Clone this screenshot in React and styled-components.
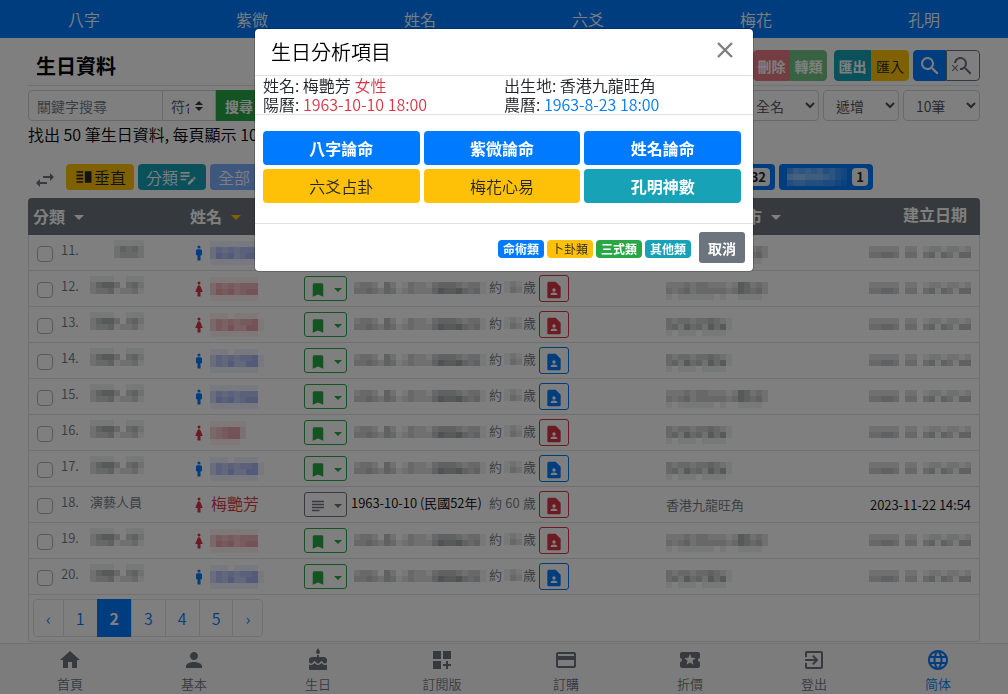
import React from "react";
import styled, { createGlobalStyle, css } from "styled-components";
import {
  MdSearch,
  MdSearchOff,
  MdSwapHoriz,
  MdVerticalSplit,
  MdEditNote,
  MdMan,
  MdWoman,
  MdBookmark,
  MdSubject,
  MdContactPage,
  MdHome,
  MdPerson,
  MdCake,
  MdDashboardCustomize,
  MdCreditCard,
  MdLocalActivity,
  MdExitToApp,
  MdLanguage,
} from "react-icons/md";

const color = {
  primary: "#007bff",
  secondary: "#6c757d",
  success: "#28a745",
  danger: "#dc3545",
  warning: "#ffc107",
  info: "#17a2b8",
  dark: "#212529",
  line: "#dee2e6",
  field: "#ced4da",
};

const weight = { normal: 350, bold: 700 };

const GlobalStyle = createGlobalStyle`
  *, *::before, *::after { box-sizing: border-box; }
  body {
    margin: 0;
    background: #fff;
    color: #000;
    font-family: "Noto Sans CJK TC", "Noto Sans", sans-serif;
    font-size: 16px;
    line-height: 20px;
    font-weight: ${weight.normal};
  }
  button, input, select { font-family: inherit; font-weight: inherit; margin: 0; }
  button { cursor: pointer; }
  svg { display: block; flex: none; }
`;

const TopNav = styled.nav`
  display: grid;
  grid-template-columns: repeat(6, 1fr);
  height: 38px;
  background: ${color.primary};
`;

const TopLink = styled.a`
  display: flex;
  align-items: center;
  justify-content: center;
  color: #fff;
  text-decoration: none;
`;

const Page = styled.main`
  padding: 0 28px 51px;
`;

const TitleBar = styled.header`
  display: flex;
  align-items: center;
  padding: 12px 0 4px 8px;
  border-bottom: 1px solid ${color.line};
`;

const Title = styled.h1`
  flex: 1;
  margin: 0;
  font-size: 20px;
  line-height: 30px;
  font-weight: ${weight.bold};
`;

const ButtonGroup = styled.div`
  display: flex;
  margin-left: ${(p) => p.$gap}px;
  & > *:first-child { border-radius: 4px 0 0 4px; }
  & > *:last-child { border-radius: 0 4px 4px 0; }
`;

const ToolButton = styled.button`
  display: flex;
  align-items: center;
  justify-content: center;
  height: 31px;
  width: ${(p) => p.$width || 37}px;
  padding: 0;
  border: 1px solid ${(p) => (p.$outline ? color.secondary : color[p.$tone])};
  background: ${(p) => (p.$outline ? "transparent" : color[p.$tone])};
  color: ${(p) => (p.$outline ? color.secondary : p.$tone === "warning" ? color.dark : "#fff")};
  font-size: 14px;
  line-height: 20px;
  font-weight: ${(p) => (p.$tone === "warning" ? weight.normal : weight.bold)};
  &:disabled { opacity: 0.65; }
`;

const FilterBar = styled.form`
  display: flex;
  justify-content: space-between;
  margin-top: 4px;
`;

const SearchGroup = styled.div`
  display: flex;
`;

const SortGroup = styled.div`
  display: flex;
  gap: 4px;
`;

const field = css`
  height: 31px;
  border: 1px solid ${color.field};
  border-radius: 4px;
  background-color: #fff;
  color: #495057;
  font-size: 14px;
  line-height: 20px;
`;

const KeywordInput = styled.input`
  ${field}
  width: 135px;
  padding: 4px 8px;
  border-radius: 4px 0 0 4px;
  &::placeholder { color: ${color.secondary}; opacity: 1; }
`;

const MatchSelect = styled.select`
  ${field}
  width: 53px;
  padding: 4px 26px 4px 8px;
  border-left: 0;
  border-radius: 0;
  appearance: none;
  background-image: url("data:image/svg+xml,%3csvg xmlns='http://www.w3.org/2000/svg' viewBox='0 0 4 5'%3e%3cpath fill='%23343a40' d='M2 0L0 2h4zm0 5L0 3h4z'/%3e%3c/svg%3e");
  background-repeat: no-repeat;
  background-position: right 12px center;
  background-size: 8px 10px;
`;

const SortSelect = styled.select`
  ${field}
  width: ${(p) => p.$width}px;
  padding: 4px 8px;
`;

const Summary = styled.p`
  margin: 3px 0 0;
`;

const CategoryBar = styled.div`
  display: flex;
  align-items: center;
  gap: 4px;
  margin-top: 20px;
  height: 26px;
  padding-left: 5px;
  color: ${color.secondary};
`;

const SwapIcon = styled.span`
  padding-top: 5px;
  margin-right: 5px;
`;

const Chip = styled.button`
  display: flex;
  align-items: center;
  justify-content: space-between;
  flex: none;
  height: 26px;
  width: ${(p) => p.$width || 68}px;
  padding: 0 ${(p) => (p.$width ? 5 : 8)}px 0 8px;
  border: 0;
  border-radius: 4px;
  background: ${(p) => (p.$light ? "#7caeff" : color[p.$tone])};
  color: ${(p) => (p.$tone === "warning" ? color.dark : "#fff")};
  font-size: 16px;
  line-height: 20px;
`;

const ChipCount = styled.span`
  padding: 0 4px;
  border-radius: 4px;
  background: #f8f9fa;
  color: ${color.dark};
  font-size: 13px;
  line-height: 18px;
  font-weight: ${weight.bold};
`;

const TableCard = styled.section`
  margin-top: 8px;
  padding-bottom: 5px;
  border-radius: 4px;
  box-shadow: inset 0 0 0 1px ${color.line};
  overflow: hidden;
`;

const Table = styled.table`
  width: 100%;
  table-layout: fixed;
  border-collapse: separate;
  border-spacing: 0;
  font-size: 13px;
`;

const HeadCell = styled.th`
  height: 37px;
  width: ${(p) => (p.$width ? p.$width + "px" : "auto")};
  padding: 0 13px ${(p) => (p.$end ? 5 : 2)}px 5px;
  background: ${color.secondary};
  color: #fff;
  font-size: 16px;
  line-height: 20px;
  text-align: ${(p) => (p.$end ? "right" : "left")};
`;

const Caret = styled.span`
  display: inline-block;
  margin-left: ${(p) => (p.$small ? 0 : 9)}px;
  vertical-align: 3px;
  border: ${(p) => (p.$small ? 4 : 5)}px solid transparent;
  border-top-color: ${(p) => p.$color || "currentColor"};
  border-bottom: 0;
`;

const Cell = styled.td`
  height: 36px;
  padding: 0 9px 0 5px;
  border-bottom: 1px solid ${color.line};
  vertical-align: middle;
`;

const CellLine = styled.div`
  display: flex;
  align-items: center;
  justify-content: ${(p) => (p.$end ? "flex-end" : "flex-start")};
  height: 35px;
  gap: ${(p) => p.$gap || 0}px;
  color: ${(p) => p.$color || "inherit"};
  padding-top: ${(p) => p.$drop || 0}px;
  padding-bottom: ${(p) => p.$lift || 0}px;
  padding-left: ${(p) => p.$indent || 0}px;
`;

const CheckBox = styled.input`
  appearance: none;
  width: 16px;
  height: 16px;
  margin: 10px 8px 0 0;
  border: 1px solid #adb5bd;
  border-radius: 4px;
`;

const Ordinal = styled.label`
  width: 29px;
  padding-top: 2px;
  color: ${color.secondary};
`;

const CategoryName = styled.span`
  padding-top: 2px;
  color: ${color.secondary};
`;

const PersonName = styled.span`
  padding: 0 0 3px 1px;
  font-size: 16px;
`;

const MarkButton = styled.button`
  display: flex;
  align-items: center;
  justify-content: space-between;
  width: 43px;
  height: 25px;
  margin-right: 1px;
  padding: 3px 4px 0 4px;
  border: 1px solid ${(p) => p.$color};
  border-radius: 3px;
  background: transparent;
  color: ${(p) => p.$color};
`;

const CardButton = styled.button`
  display: flex;
  align-items: center;
  justify-content: center;
  width: 30px;
  height: 27px;
  padding: 3px 0 0;
  border: 1px solid ${(p) => p.$color};
  border-radius: 3px;
  background: transparent;
  color: ${(p) => p.$color};
`;

const BirthDate = styled.span`
  display: flex;
  width: 135px;
  padding-bottom: ${(p) => (p.$masked ? 1 : 3)}px;
  padding-left: ${(p) => (p.$masked ? 3 : 0)}px;
  white-space: nowrap;
`;

const Age = styled.span`
  display: flex;
  align-items: center;
  justify-content: space-between;
  width: 47px;
  padding-bottom: 3px;
  color: ${color.secondary};
`;

const Pager = styled.ul`
  display: flex;
  margin: 4px 0 0;
  padding: 0 0 0 5px;
  list-style: none;
`;

const PageLink = styled.a`
  display: block;
  padding: 8px 12px;
  margin-right: -1px;
  border: 1px solid ${(p) => (p.$active ? color.primary : color.line)};
  border-radius: ${(p) => p.$radius || "0"};
  background: ${(p) => (p.$active ? color.primary : "transparent")};
  color: ${(p) => (p.$active ? "#fff" : color.primary)};
  font-weight: ${(p) => (p.$active ? weight.bold : weight.normal)};
  text-decoration: none;
`;

const BottomNav = styled.nav`
  position: fixed;
  right: 0;
  bottom: 0;
  left: 0;
  display: grid;
  grid-template-columns: repeat(8, 1fr);
  height: 51px;
  padding: 4px 8px 0;
  border-top: 1px solid ${color.line};
  background: #f8f9fa;
`;

const BottomLink = styled.a`
  display: flex;
  flex-direction: column;
  align-items: center;
  gap: 2px;
  color: ${(p) => (p.$active ? color.primary : color.secondary)};
  font-size: 13px;
  line-height: 20px;
  text-decoration: none;
`;

const Backdrop = styled.div`
  position: fixed;
  inset: 0;
  padding: 28px 8px;
  background: rgba(0, 0, 0, 0.5);
`;

const Dialog = styled.div`
  max-width: 500px;
  margin: 0 auto;
  border: 1px solid rgba(0, 0, 0, 0.2);
  border-radius: 5px;
  background: #fff;
  background-clip: padding-box;
  color: ${color.dark};
`;

const DialogHeader = styled.header`
  display: flex;
  align-items: center;
  justify-content: space-between;
  height: 47px;
  padding: 0 20px 0 16px;
  border-bottom: 1px solid ${color.line};
`;

const DialogTitle = styled.h2`
  margin: 0;
  color: #000;
  font-size: 20px;
  line-height: 30px;
  font-weight: ${weight.normal};
`;

const CloseButton = styled.button`
  padding: 0 0 4px;
  border: 0;
  background: none;
  color: #7f7f7f;
`;

const Facts = styled.div`
  display: grid;
  grid-template-columns: 1fr 1fr;
  padding: 0 8px;
  border-bottom: 1px solid ${color.line};
  line-height: 19px;
`;

const Tint = styled.span`
  color: ${(p) => color[p.$tone]};
`;

const Choices = styled.div`
  display: grid;
  grid-template-columns: repeat(3, 1fr);
  gap: 4px;
  padding: 16px 12px 20px 8px;
  border-bottom: 1px solid ${color.line};
`;

const ChoiceButton = styled.button`
  height: 34px;
  padding: 0 8px;
  border: 0;
  border-radius: 4px;
  background: ${(p) => color[p.$tone]};
  color: ${(p) => (p.$tone === "warning" ? color.dark : "#fff")};
  font-size: 16px;
  line-height: 20px;
  font-weight: ${(p) => (p.$tone === "warning" ? weight.normal : weight.bold)};
`;

const DialogFooter = styled.footer`
  display: flex;
  align-items: center;
  justify-content: flex-end;
  gap: 3px;
  height: 47px;
  padding: 0 8px;
`;

const Badge = styled.span`
  padding: 0 5px;
  margin-top: 3px;
  border-radius: 4px;
  background: ${(p) => color[p.$tone]};
  color: ${(p) => (p.$tone === "warning" ? color.dark : "#fff")};
  font-size: 12px;
  line-height: 18px;
  font-weight: ${(p) => (p.$tone === "warning" ? weight.normal : weight.bold)};
`;

const CancelButton = styled.button`
  height: 31px;
  margin-left: 5px;
  padding: 0 9px;
  border: 0;
  border-radius: 3px;
  background: ${color.secondary};
  color: #fff;
  font-size: 14px;
  line-height: 20px;
  font-weight: ${weight.bold};
`;

/* Masked personal data: each digit is the strength of one 6px tile. */
function Mosaic({ rows, fill }) {
  return (
    <svg width={rows[0].length * 6} height={rows.length * 6} shapeRendering="crispEdges" aria-hidden="true">
      {rows.map((row, y) =>
        [...row].map((level, x) =>
          level === "0" ? null : (
            <rect key={x + "-" + y} x={x * 6} y={y * 6} width="6" height="6" fill={fill} fillOpacity={level * 0.07} />
          )
        )
      )}
    </svg>
  );
}

const tileColor = { male: "#2f50e0", female: "#d02838", plain: "#20282c" };

const categoryTiles = ["111100111", "245530342", "233412231"];
const shortCategoryTiles = ["000011111", "000024342", "000023332"];
const dateTiles = ["22222022012212212", "33443033034143144"];
const ageTiles = ["121", "132"];
const birthTiles = ["2332042013221344432331", "3343243123222465564341"];
const longPlace = ["22232332221254232", "32342333332354342", "10111111010011110"];
const shortPlace = ["32332334321", "34253425351", "10111011110"];
const nameA = ["111111110", "354545550", "365645660", "111111110"];
const nameB = ["111011110", "354545561", "354644661", "111111110"];
const nameC = ["111111", "345662", "345662", "111110"];

const people = [
  { n: 11, sex: "male", name: nameA, place: longPlace, category: shortCategoryTiles },
  { n: 12, sex: "female", name: nameA, place: longPlace },
  { n: 13, sex: "female", name: nameB, place: shortPlace },
  { n: 14, sex: "male", name: nameB, place: shortPlace },
  { n: 15, sex: "male", name: nameA, place: longPlace },
  { n: 16, sex: "female", name: nameC, place: shortPlace },
  { n: 17, sex: "male", name: nameB, place: shortPlace },
  { n: 18, sex: "female", open: true },
  { n: 19, sex: "female", name: nameA, place: longPlace },
  { n: 20, sex: "male", name: nameB, place: shortPlace },
];

function PersonRow({ person }) {
  const { n, sex, open } = person;
  const tone = sex === "male" ? color.primary : color.danger;
  const Figure = sex === "male" ? MdMan : MdWoman;
  const Mark = open ? MdSubject : MdBookmark;
  return (
    <tr>
      <Cell>
        <CellLine $lift={7} $indent={4}>
          <CheckBox type="checkbox" id={"row-" + n} />
          <Ordinal htmlFor={"row-" + n}>{n}.</Ordinal>
          {open ? <CategoryName>演藝人員</CategoryName> : <Mosaic rows={person.category || categoryTiles} fill={tileColor.plain} />}
        </CellLine>
      </Cell>
      <Cell>
        <CellLine $color={tone} $gap={2}>
          <Figure size={18} />
          {open ? <PersonName>梅艷芳</PersonName> : <Mosaic rows={person.name} fill={tileColor[sex]} />}
        </CellLine>
      </Cell>
      <Cell>
        <CellLine $gap={3}>
          <MarkButton $color={open ? color.secondary : color.success} aria-label="標記">
            <Mark size={18} />
            <Caret $small />
          </MarkButton>
          <BirthDate $masked={!open}>
            {open ? "1963-10-10 (民國52年)" : <Mosaic rows={birthTiles} fill={tileColor.plain} />}
          </BirthDate>
          <Age>
            <span>約</span>
            {open ? <span>60</span> : <Mosaic rows={ageTiles} fill={tileColor.plain} />}
            <span>歲</span>
          </Age>
          <CardButton $color={tone} aria-label="分析">
            <MdContactPage size={20} />
          </CardButton>
        </CellLine>
      </Cell>
      <Cell>
        <CellLine $color={color.secondary} $drop={open ? 0 : 5}>
          {open ? "香港九龍旺角" : <Mosaic rows={person.place} fill={tileColor.plain} />}
        </CellLine>
      </Cell>
      <Cell>
        <CellLine $end $lift={open ? 0 : 1}>
          {open ? "2023-11-22 14:54" : <Mosaic rows={dateTiles} fill={tileColor.plain} />}
        </CellLine>
      </Cell>
    </tr>
  );
}

const bottomItems = [
  [MdHome, "首頁"],
  [MdPerson, "基本"],
  [MdCake, "生日"],
  [MdDashboardCustomize, "訂閱版"],
  [MdCreditCard, "訂購"],
  [MdLocalActivity, "折價"],
  [MdExitToApp, "登出"],
  [MdLanguage, "简体"],
];

const choices = [
  ["八字論命", "primary"],
  ["紫微論命", "primary"],
  ["姓名論命", "primary"],
  ["六爻占卦", "warning"],
  ["梅花心易", "warning"],
  ["孔明神數", "info"],
];

function AnalysisDialog() {
  return (
    <Backdrop>
      <Dialog role="dialog" aria-modal="true" aria-labelledby="dialog-title">
        <DialogHeader>
          <DialogTitle id="dialog-title">生日分析項目</DialogTitle>
          <CloseButton aria-label="關閉">
            <svg width="16" height="16" viewBox="0 0 16 16" stroke="currentColor" strokeWidth="2.4">
              <path d="M1 1 15 15M15 1 1 15" />
            </svg>
          </CloseButton>
        </DialogHeader>
        <Facts>
          <span>姓名: 梅艷芳 <Tint $tone="danger">女性</Tint></span>
          <span>出生地: 香港九龍旺角</span>
          <span>陽曆: <Tint $tone="danger">1963-10-10 18:00</Tint></span>
          <span>農曆: <Tint $tone="primary">1963-8-23 18:00</Tint></span>
        </Facts>
        <Choices>
          {choices.map(([text, tone]) => (
            <ChoiceButton key={text} $tone={tone}>{text}</ChoiceButton>
          ))}
        </Choices>
        <DialogFooter>
          <Badge $tone="primary">命術類</Badge>
          <Badge $tone="warning">卜卦類</Badge>
          <Badge $tone="success">三式類</Badge>
          <Badge $tone="info">其他類</Badge>
          <CancelButton>取消</CancelButton>
        </DialogFooter>
      </Dialog>
    </Backdrop>
  );
}

const shortChipTiles = ["35554543", "68665553", "34432332"];
const chipTiles = ["4656564532", "7887776532", "4554443321"];

const chips = [
  { width: 91 },
  { width: 91 },
  { width: 91 },
  { width: 91 },
  { width: 91, count: 32 },
  { width: 94, count: 1, tiles: chipTiles },
];

export default function App() {
  return (
    <>
      <GlobalStyle />
      <TopNav>
        {["八字", "紫微", "姓名", "六爻", "梅花", "孔明"].map((t) => (
          <TopLink href="#" key={t}>{t}</TopLink>
        ))}
      </TopNav>
      <Page>
        <TitleBar>
          <Title>生日資料</Title>
          <ButtonGroup $gap={0}>
            <ToolButton $tone="danger" disabled>刪除</ToolButton>
            <ToolButton $tone="success" disabled>轉類</ToolButton>
          </ButtonGroup>
          <ButtonGroup $gap={7}>
            <ToolButton $tone="info">匯出</ToolButton>
            <ToolButton $tone="warning" $width={38}>匯入</ToolButton>
          </ButtonGroup>
          <ButtonGroup $gap={4}>
            <ToolButton $tone="primary" $width={33} aria-label="搜尋"><MdSearch size={24} /></ToolButton>
            <ToolButton $outline $width={34} aria-label="清除搜尋"><MdSearchOff size={24} /></ToolButton>
          </ButtonGroup>
        </TitleBar>
        <FilterBar>
          <SearchGroup>
            <KeywordInput placeholder="關鍵字搜尋" aria-label="關鍵字搜尋" />
            <MatchSelect aria-label="比對方式"><option>符合</option></MatchSelect>
            <ToolButton type="button" $tone="success" $width={46}>搜尋</ToolButton>
          </SearchGroup>
          <SortGroup>
            <SortSelect $width={76} aria-label="排序欄位"><option>全名</option></SortSelect>
            <SortSelect $width={76} aria-label="排序方向"><option>遞增</option></SortSelect>
            <SortSelect $width={77} aria-label="每頁筆數"><option>10筆</option></SortSelect>
          </SortGroup>
        </FilterBar>
        <Summary>找出 50 筆生日資料, 每頁顯示 10</Summary>
        <CategoryBar>
          <SwapIcon><MdSwapHoriz size={24} /></SwapIcon>
          <Chip $tone="warning"><MdVerticalSplit size={20} />垂直</Chip>
          <Chip $tone="info">分類<MdEditNote size={20} /></Chip>
          <Chip $tone="primary" $light $width={90}>全部</Chip>
          {chips.map(({ width, count, tiles }, i) => (
            <Chip key={i} $tone="primary" $width={width} aria-label={"分類 " + (i + 1)}>
              <Mosaic rows={tiles || shortChipTiles} fill="#fff" />
              {count && <ChipCount>{count}</ChipCount>}
            </Chip>
          ))}
        </CategoryBar>
        <TableCard>
          <Table>
            <thead>
              <tr>
                <HeadCell $width={157}>分類<Caret /></HeadCell>
                <HeadCell $width={114}>姓名<Caret $color={color.warning} /></HeadCell>
                <HeadCell $width={362}>生日<Caret /></HeadCell>
                <HeadCell $width={190}>出生國家城市<Caret /></HeadCell>
                <HeadCell $end>建立日期</HeadCell>
              </tr>
            </thead>
            <tbody>
              {people.map((p) => <PersonRow key={p.n} person={p} />)}
            </tbody>
          </Table>
          <Pager>
            <li><PageLink href="#" $radius="4px 0 0 4px">‹</PageLink></li>
            {[1, 2, 3, 4, 5].map((n) => (
              <li key={n}><PageLink href="#" $active={n === 2}>{n}</PageLink></li>
            ))}
            <li><PageLink href="#" $radius="0 4px 4px 0">›</PageLink></li>
          </Pager>
        </TableCard>
      </Page>
      <BottomNav>
        {bottomItems.map(([Icon, text]) => (
          <BottomLink href="#" key={text} $active={text === "简体"}>
            <Icon size={24} />
            {text}
          </BottomLink>
        ))}
      </BottomNav>
      <AnalysisDialog />
    </>
  );
}
